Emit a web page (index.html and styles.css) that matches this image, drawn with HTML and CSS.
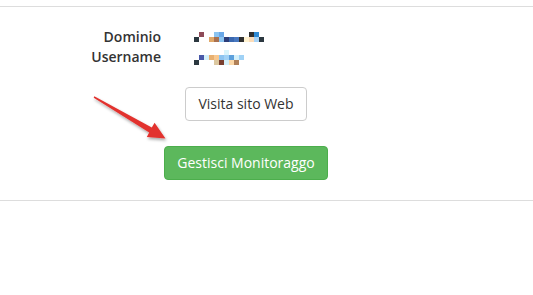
FILE: index.html
```html
<!DOCTYPE html>
<html lang="it">
<head>
    <meta charset="UTF-8">
    <meta name="viewport" content="width=device-width, initial-scale=1.0">
    <title>Dettagli dominio</title>
    <link rel="stylesheet" href="styles.css">
</head>
<body>
    <div class="panel">
        <div class="info">
            <div class="label">Dominio</div>
            <div class="value">
                <div class="pixels">
                    <i></i><i class="c1"></i><i></i><i></i><i class="c2"></i><i class="c3"></i><i></i><i></i><i></i><i></i><i></i><i class="c4"></i><i class="c5"></i><i></i>
                    <i class="c6"></i><i></i><i></i><i class="c7"></i><i class="c8"></i><i class="c2"></i><i class="c9"></i><i class="c10"></i><i class="c11"></i><i class="c4"></i><i class="c12"></i><i class="c13"></i><i class="c14"></i><i class="c6"></i>
                </div>
            </div>
            <div class="label">Username</div>
            <div class="value">
                <div class="pixels">
                    <i></i><i></i><i></i><i></i><i></i><i></i><i class="c15"></i><i></i><i></i><i></i><i></i><i></i><i></i><i></i>
                    <i></i><i class="c16"></i><i class="c17"></i><i class="c18"></i><i class="c19"></i><i class="c2"></i><i class="c20"></i><i class="c21"></i><i class="c17"></i><i class="c20"></i><i></i><i></i><i></i><i></i>
                    <i class="c6"></i><i></i><i></i><i></i><i class="c22"></i><i class="c23"></i><i class="c17"></i><i class="c24"></i><i class="c25"></i><i></i><i></i><i></i><i></i><i></i>
                </div>
            </div>
        </div>

        <div class="actions">
            <button class="btn btn-default">Visita sito Web</button>
            <button class="btn btn-success">Gestisci Monitoraggo</button>
        </div>

        <svg class="arrow" width="180" height="160" viewBox="0 0 180 160">
            <defs>
                <filter id="shadow" x="-20%" y="-20%" width="140%" height="140%">
                    <feDropShadow dx="1" dy="2" stdDeviation="1.5" flood-color="#000" flood-opacity="0.35"/>
                </filter>
            </defs>
            <polygon filter="url(#shadow)" fill="#e2332f"
                points="94.3,96.3 151.8,127.6 154.6,122.8 165.5,138.5 146.8,137 149.2,132.4 93.7,97.7"/>
        </svg>
    </div>
</body>
</html>
```

FILE: styles.css
```css
body {
    font-family: "Open Sans", Arial, sans-serif;
    font-size: 14px;
    color: #333;
    background-color: #fff;
    margin: 0;
}

.panel {
    position: relative;
    margin-top: 6px;
    height: 193px;
    border-top: 1px solid #ddd;
    border-bottom: 1px solid #ddd;
}

.info {
    display: grid;
    grid-template-columns: 161px 1fr;
    column-gap: 33px;
    padding-top: 20px;
    line-height: 20px;
}

.label {
    text-align: right;
    font-weight: 600;
}

.value {
    display: flex;
    align-items: center;
}

.pixels {
    display: grid;
    grid-template-columns: repeat(14, 5px);
    grid-auto-rows: 5px;
}

.pixels i { display: block; }
.pixels .c1 { background: #8e4a58; }
.pixels .c2 { background: #8cc4f0; }
.pixels .c3 { background: #6aa8e8; }
.pixels .c4 { background: #303030; }
.pixels .c5 { background: #2e8ad4; }
.pixels .c6 { background: #2c3840; }
.pixels .c7 { background: #e0a868; }
.pixels .c8 { background: #a87050; }
.pixels .c9 { background: #2c3c78; }
.pixels .c10 { background: #3a68b0; }
.pixels .c11 { background: #4878c0; }
.pixels .c12 { background: #fff2d0; }
.pixels .c13 { background: #fcdcb8; }
.pixels .c14 { background: #a8d4f8; }
.pixels .c15 { background: #d8f4fc; }
.pixels .c16 { background: #4858a8; }
.pixels .c17 { background: #d4f0fa; }
.pixels .c18 { background: #e8b070; }
.pixels .c19 { background: #f8c890; }
.pixels .c20 { background: #a0d2f6; }
.pixels .c21 { background: #5ca0dc; }
.pixels .c22 { background: #dcc8a0; }
.pixels .c23 { background: #7a4030; }
.pixels .c24 { background: #fcd8a8; }
.pixels .c25 { background: #b08058; }

.actions {
    display: flex;
    flex-direction: column;
    align-items: center;
    width: 164px;
    margin-left: 164px;
    margin-top: 20px;
}

.btn {
    font-family: inherit;
    font-size: 14px;
    line-height: 20px;
    padding: 6px 12px;
    border-radius: 4px;
    border: 1px solid transparent;
    cursor: pointer;
}

.btn-default {
    color: #333;
    background-color: #fff;
    border-color: #ccc;
}

.btn-success {
    margin-top: 25px;
    color: #fff;
    background-color: #5cb85c;
    border-color: #4cae4c;
}

.arrow {
    position: absolute;
    left: 0;
    top: -7px;
    pointer-events: none;
}
```
